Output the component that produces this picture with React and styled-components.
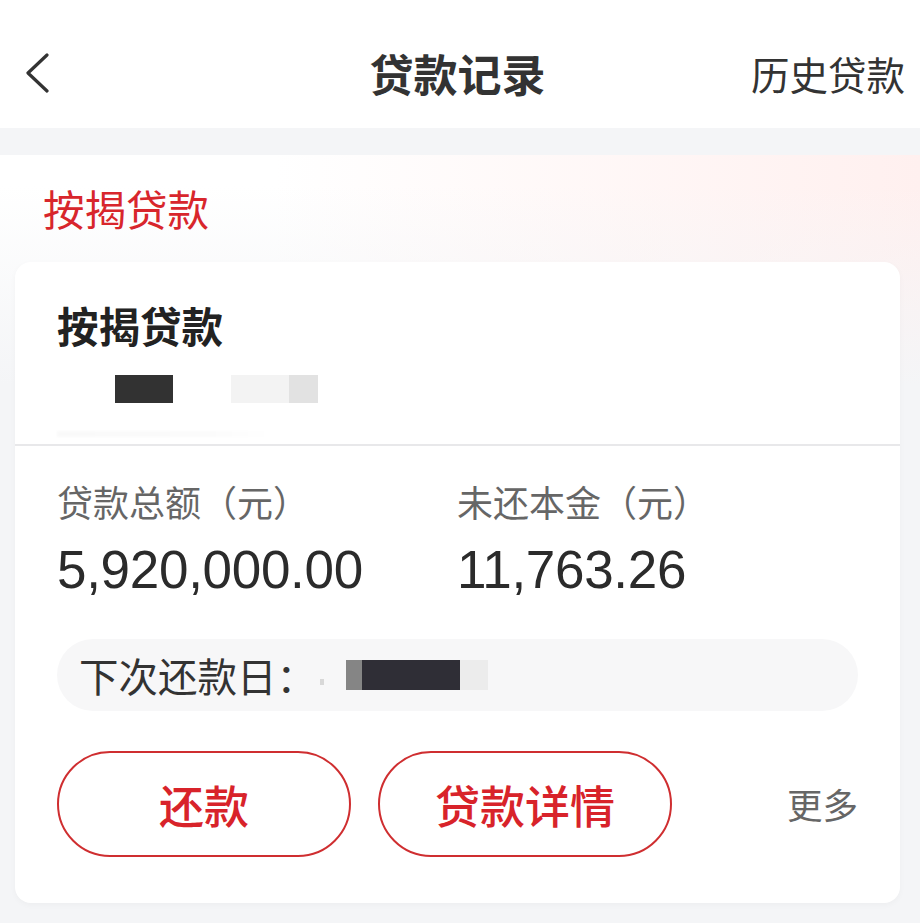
import React from "react";
import styled, { createGlobalStyle } from "styled-components";

const Global = createGlobalStyle`
  html, body { margin: 0; padding: 0; background: #f4f5f7; }
  body { font-family: "Liberation Sans", "Noto Sans CJK SC", sans-serif; color: #333; }
  * { box-sizing: border-box; }
`;

const Page = styled.div`
  width: 920px;
  min-height: 923px;
  background: #f4f5f7;
  display: flex;
  flex-direction: column;
`;

const Header = styled.header`
  height: 128px;
  background: #fff;
  display: grid;
  grid-template-columns: 1fr auto 1fr;
  align-items: center;
  padding: 18px 20px 0 15px;
`;

const BackButton = styled.button`
  justify-self: start;
  width: 24px;
  height: 40px;
  margin-left: 10px;
  padding: 0;
  border: 0;
  background: none;
  display: flex;
`;

const Title = styled.h1`
  margin: 0;
  font-family: "Noto Sans CJK SC", sans-serif;
  font-size: 44px;
  font-weight: 700;
  color: #333;
  line-height: 56px;
`;

const HeaderLink = styled.span`
  justify-self: end;
  margin-right: -5px;
  font-family: "Noto Sans CJK SC", sans-serif;
  font-size: 38.5px;
  color: #333;
  line-height: 52px;
`;

const Section = styled.section`
  margin-top: 27px;
  padding: 26px 20px 21px 15px;
  background:
    linear-gradient(180deg, rgba(244, 245, 247, 0) 30px, #f4f5f7 230px),
    linear-gradient(90deg, #ffffff 30%, #fff0ef 100%);
`;

const SectionTitle = styled.h2`
  margin: 0 0 27px 28px;
  font-family: "Noto Sans CJK SC", sans-serif;
  font-size: 41.5px;
  font-weight: 400;
  color: #d8262c;
  line-height: 54px;
`;

const Card = styled.div`
  background: #fff;
  border-radius: 16px;
  box-shadow: 0 2px 6px rgba(0, 0, 0, 0.03);
  padding-bottom: 46px;
`;

const CardTop = styled.div`
  padding: 35px 42px 0;
  height: 184px;
  border-bottom: 2px solid #e8e8ea;
  display: flex;
  flex-direction: column;
`;

const CardTitle = styled.div`
  font-family: "Noto Sans CJK SC", sans-serif;
  font-size: 41.5px;
  font-weight: 700;
  color: #222;
  line-height: 56px;
`;

const RedactRow = styled.div`
  display: flex;
  margin-top: 22px;
  padding-left: 58px;
  height: 28px;
`;

const Block = styled.div`
  width: ${(p) => p.$w}px;
  height: ${(p) => p.$h || 28}px;
  background: ${(p) => p.$c};
  margin-left: ${(p) => p.$ml || 0}px;
`;

const FaintBar = styled.div`
  margin-top: 28px;
  width: 215px;
  height: 6px;
  background: linear-gradient(90deg, rgba(0,0,0,0.025), rgba(0,0,0,0.015) 70%, rgba(0,0,0,0));
  filter: blur(1px);
`;

const CardBody = styled.div`
  padding: 31px 42px 0;
`;

const Stats = styled.div`
  display: grid;
  grid-template-columns: 400px 1fr;
  row-gap: 15px;
`;

const Label = styled.div`
  font-family: "Noto Sans CJK SC", sans-serif;
  font-size: 36px;
  color: #666;
  line-height: 48px;
`;

const Value = styled.div`
  font-family: "Liberation Sans", sans-serif;
  font-size: 53px;
  color: #2b2b2b;
  line-height: 60px;
  letter-spacing: -0.3px;
`;

const DatePill = styled.div`
  margin-top: 39px;
  height: 72px;
  border-radius: 36px;
  background: #f7f7f8;
  display: flex;
  align-items: center;
  padding-left: 22px;
`;

const DateLabel = styled.span`
  font-family: "Noto Sans CJK SC", sans-serif;
  font-size: 39.5px;
  color: #333;
  line-height: 50px;
`;

const DateRedact = styled.div`
  display: flex;
  align-items: center;
  margin-left: 4px;
`;

const Dot = styled.div`
  width: 4px;
  height: 6px;
  background: #d8d8d8;
  margin-top: 14px;
`;

const Actions = styled.div`
  margin-top: 40px;
  display: flex;
  align-items: center;
  gap: 27px;
`;

const OutlineButton = styled.button`
  width: 294px;
  height: 106px;
  border: 2px solid #cf2e30;
  border-radius: 53px;
  background: #fff;
  color: #d8232a;
  font-family: "Noto Sans CJK SC", sans-serif;
  font-size: 45px;
  font-weight: 500;
  line-height: 1;
  padding: 0;
  display: flex;
  align-items: center;
  justify-content: center;
`;

const More = styled.span`
  margin-left: auto;
  font-family: "Noto Sans CJK SC", sans-serif;
  font-size: 35.5px;
  color: #666;
  line-height: 48px;
`;

export default function App() {
  return (
    <Page>
      <Global />
      <Header>
        <BackButton aria-label="返回">
          <svg width="24" height="40" viewBox="0 0 24 40" fill="none">
            <path d="M22 2 L3 20 L22 38" stroke="#333" strokeWidth="3.2" strokeLinecap="round" strokeLinejoin="round" />
          </svg>
        </BackButton>
        <Title>贷款记录</Title>
        <HeaderLink>历史贷款</HeaderLink>
      </Header>
      <Section>
        <SectionTitle>按揭贷款</SectionTitle>
        <Card>
          <CardTop>
            <CardTitle>按揭贷款</CardTitle>
            <RedactRow>
              <Block $w={58} $c="#323232" />
              <Block $w={58} $c="#f3f3f3" $ml={58} />
              <Block $w={29} $c="#e2e2e2" />
            </RedactRow>
            <FaintBar />
          </CardTop>
          <CardBody>
            <Stats>
              <Label>贷款总额（元）</Label>
              <Label>未还本金（元）</Label>
              <Value>5,920,000.00</Value>
              <Value>11,763.26</Value>
            </Stats>
            <DatePill>
              <DateLabel>下次还款日：</DateLabel>
              <DateRedact>
                <Dot />
                <Block $w={16} $h={30} $c="#858585" $ml={22} />
                <Block $w={98} $h={30} $c="#2f2e36" />
                <Block $w={28} $h={30} $c="#ececec" />
              </DateRedact>
            </DatePill>
            <Actions>
              <OutlineButton>还款</OutlineButton>
              <OutlineButton>贷款详情</OutlineButton>
              <More>更多</More>
            </Actions>
          </CardBody>
        </Card>
      </Section>
    </Page>
  );
}
